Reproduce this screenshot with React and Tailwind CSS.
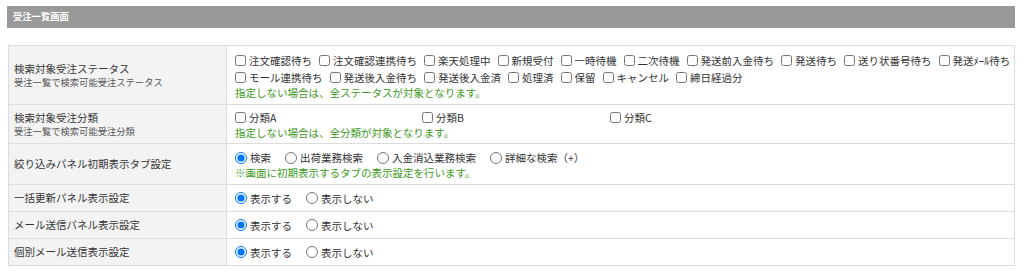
import React from "react";

const FONT = { fontFamily: '"Noto Sans CJK JP", "Noto Sans", sans-serif' };

function Check({ label }) {
  return (
    <label className="inline-flex items-center gap-[3px] mr-[7px] whitespace-nowrap h-[17px]">
      <input type="checkbox" className="m-0 w-[11px] h-[11px]" readOnly />
      <span className="leading-[17px]">{label}</span>
    </label>
  );
}

function Radio({ label, checked, name }) {
  return (
    <label className="inline-flex items-center gap-[3px] mr-[14px] whitespace-nowrap h-[17px]">
      <input type="radio" name={name} defaultChecked={checked} className="m-0 w-[12px] h-[12px]" />
      <span className="leading-[17px]">{label}</span>
    </label>
  );
}

function Note({ children }) {
  return <div className="text-[#3c9a22] leading-[13px] h-[13px]">{children}</div>;
}

function Label({ title, sub }) {
  return (
    <td className="bg-[#f3f3f3] border border-[#dcdcdc] pl-[5px] align-middle">
      <div className="text-[10.5px] leading-[14px] text-[#333]">{title}</div>
      {sub && <div className="text-[9.3px] leading-[13px] text-[#555]">{sub}</div>}
    </td>
  );
}

export default function App() {
  const line1 = ["注文確認待ち", "注文確認連携待ち", "楽天処理中", "新規受付", "一時待機", "二次待機", "発送前入金待ち", "発送待ち", "送り状番号待ち", "発送ﾒｰﾙ待ち"];
  const line2 = ["モール連携待ち", "発送後入金待ち", "発送後入金済", "処理済", "保留", "キャンセル", "締日経過分"];
  const showRows = ["一括更新パネル表示設定", "メール送信パネル表示設定", "個別メール送信表示設定"];
  return (
    <div className="w-[1024px] h-[274px] bg-white pt-[6px] pl-[7px] pr-[9px] text-[#333]" style={FONT}>
      <div className="h-[22px] bg-[#999999] flex items-center pl-[6px] text-white text-[9.3px] font-bold">
        受注一覧画面
      </div>
      <table className="table-fixed mt-[17px] ml-[1px] w-[1007px] border-collapse border border-[#dcdcdc] text-[10.5px]">
        <colgroup>
          <col className="w-[218px]" />
          <col />
        </colgroup>
        <tbody>
          <tr className="h-[59px]">
            <Label title="検索対象受注ステータス" sub="受注一覧で検索可能受注ステータス" />
            <td className="border border-[#dcdcdc] pl-[8px] align-middle">
              <div className="flex h-[17px] whitespace-nowrap">
                {line1.map((t) => <Check key={t} label={t} />)}
              </div>
              <div className="flex h-[17px]">
                {line2.map((t) => <Check key={t} label={t} />)}
              </div>
              <Note>指定しない場合は、全ステータスが対象となります。</Note>
            </td>
          </tr>
          <tr className="h-[39px]">
            <Label title="検索対象受注分類" sub="受注一覧で検索可能受注分類" />
            <td className="border border-[#dcdcdc] pl-[8px] align-middle">
              <div className="grid grid-cols-[187px_188px_1fr] h-[17px]">
                <div><Check label="分類A" /></div>
                <div><Check label="分類B" /></div>
                <div><Check label="分類C" /></div>
              </div>
              <Note>指定しない場合は、全分類が対象となります。</Note>
            </td>
          </tr>
          <tr className="h-[41px]">
            <Label title="絞り込みパネル初期表示タブ設定" />
            <td className="border border-[#dcdcdc] pl-[8px] align-middle">
              <div className="flex h-[17px]">
                <Radio name="tab" label="検索" checked />
                <Radio name="tab" label="出荷業務検索" />
                <Radio name="tab" label="入金消込業務検索" />
                <Radio name="tab" label="詳細な検索（+）" />
              </div>
              <Note>※画面に初期表示するタブの表示設定を行います。</Note>
            </td>
          </tr>
          {showRows.map((r, i) => (
            <tr key={r} className="h-[27px]">
              <Label title={r} />
              <td className="border border-[#dcdcdc] pl-[8px] align-middle">
                <div className="flex h-[17px]">
                  <Radio name={`s${i}`} label="表示する" checked />
                  <Radio name={`s${i}`} label="表示しない" />
                </div>
              </td>
            </tr>
          ))}
        </tbody>
      </table>
    </div>
  );
}
